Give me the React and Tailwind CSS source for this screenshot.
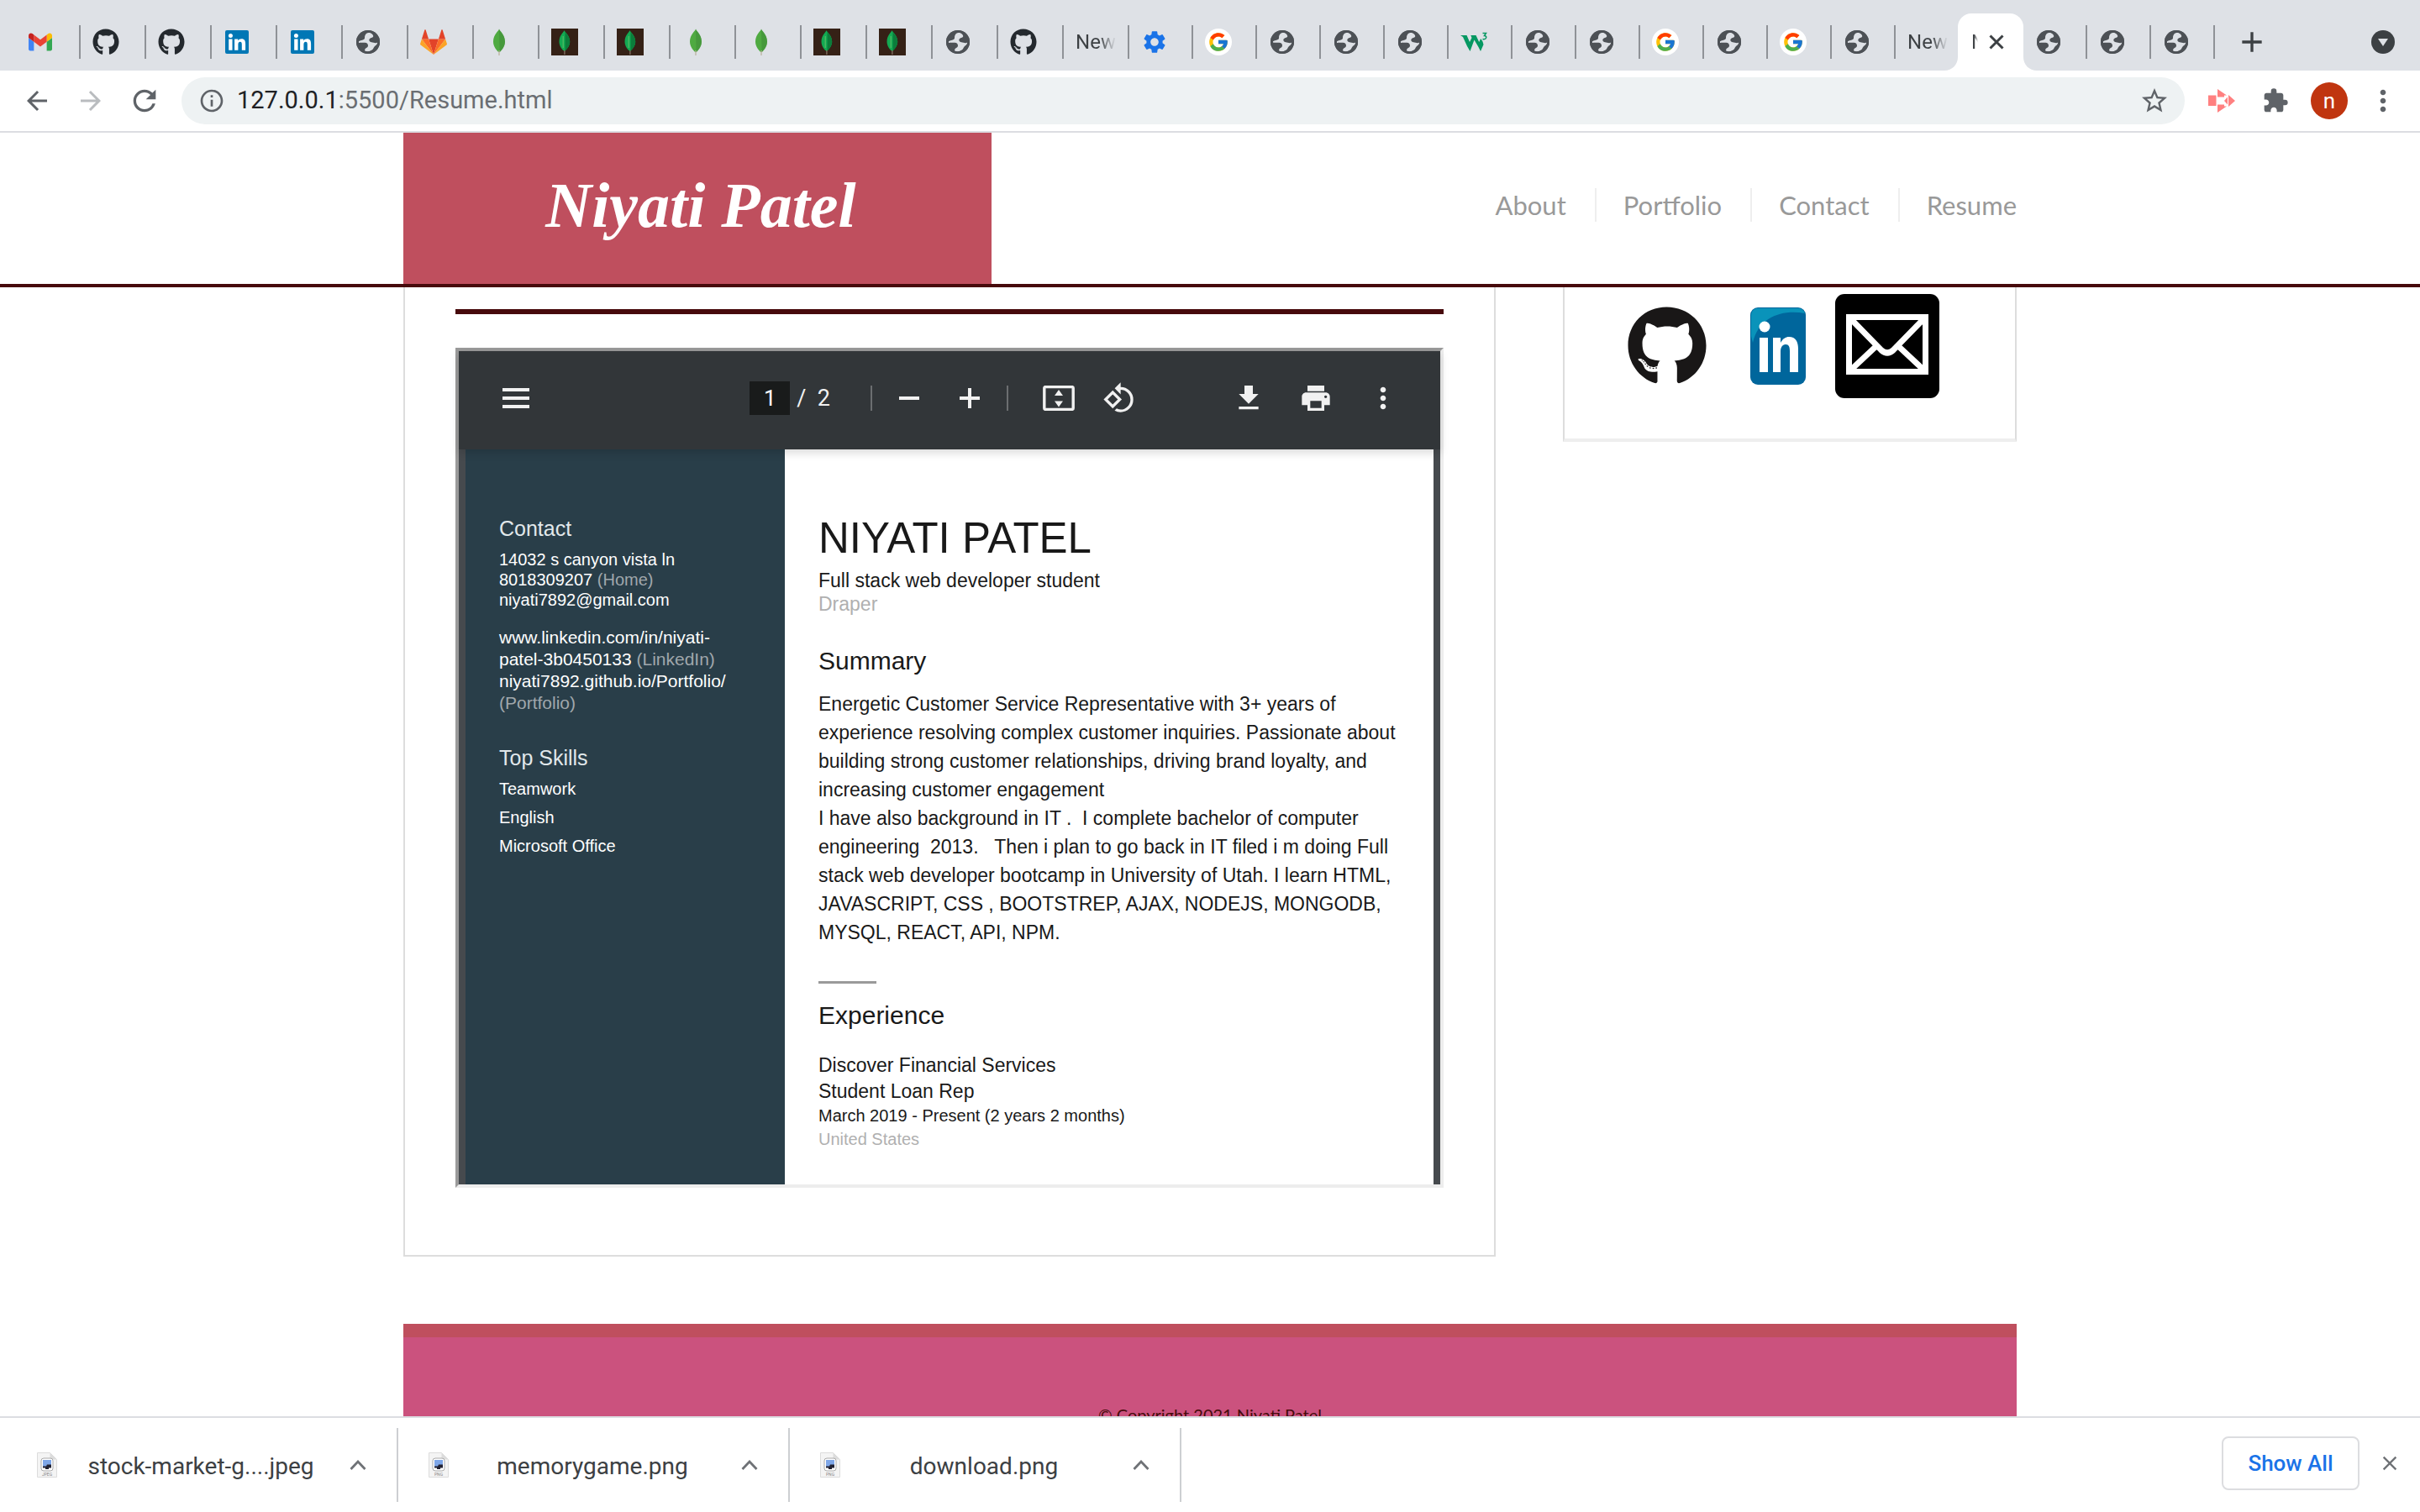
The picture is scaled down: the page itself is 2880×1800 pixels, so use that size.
import React from "react";
import {
  MdArrowBack, MdArrowForward, MdRefresh, MdInfoOutline, MdStarBorder, MdExtension, MdMoreVert,
  MdSettings, MdPrint, MdRotate90DegreesCcw, MdClose, MdAdd,
} from "react-icons/md";
import { FaGithub } from "react-icons/fa";
import { FcGoogle } from "react-icons/fc";

const Gmail = () => (
  <svg viewBox="52 42 88 66" className="w-7 h-[22px]">
    <path fill="#4285f4" d="M58 108h14V74L52 59v43c0 3.320 2.690 6 6 6" />
    <path fill="#34a853" d="M120 108h14c3.320 0 6-2.690 6-6V59l-20 15" />
    <path fill="#fbbc04" d="M120 48v26l20-15v-8c0-7.420-8.470-11.650-14.400-7.200" />
    <path fill="#ea4335" d="M72 74V48l24 18 24-18v26L96 92" />
    <path fill="#c5221f" d="M52 51v8l20 15V48l-5.600-4.200c-5.940-4.450-14.400-.22-14.400 7.200" />
  </svg>
);

const GithubTab = () => <FaGithub className="size-8 text-[#24292e]" />;

const LinkedinTab = () => (
  <svg viewBox="0 0 28 28" className="size-7">
    <rect width="28" height="28" rx="2" fill="#0077b5" />
    <circle cx="6.400" cy="6.600" r="2.500" fill="#fff" />
    <path fill="#fff" d="M4.200 10.600h4.300v13.200H4.200zM11.100 10.600h4.100v1.800c.8-1.300 2.200-2.200 4.200-2.200 3.700 0 4.700 2.300 4.700 6v7.600h-4.300v-6.800c0-1.700-.2-3.200-2-3.200s-2.400 1.400-2.400 3.200v6.800h-4.300z" />
  </svg>
);

const Globe = () => (
  <svg viewBox="0 0 28 28" className="size-7">
    <circle cx="14" cy="14" r="14" fill="#4d5156" />
    <path fill="#dee1e6" d="M16 2.800c-2.500 0-4.500 1-5.500 3.200-1 2 .2 3.500-1.200 4.800-1.600 1.400-4.600.9-6.300 2.500-.4 1.600.2 1.400 2.200 1.400h5c2.500 0 3.800 1.600 3.800 3.600 0 2.400-2.600 2.600-3.600 4.200-.6 1.200-.2 2.400.6 3 2.200.6 5.400-.4 7.600-1.900 1.600-1.200 2-3 3.200-4.400 1.300-1.200 3.200-1.800 3.500-4.600-1.500 1-3 .8-4.700.2-2-.8-3.200-.4-4.600-1.600-1.200-1.200-.8-3 .8-3.800 1.400-.8 2.800-.2 3.400-1.800.4-1.600-1.400-3.800-4.200-4.800z" />
    <circle cx="14" cy="14" r="12.600" fill="none" stroke="#4d5156" strokeWidth="2.800" />
  </svg>
);

const Gitlab = () => (
  <svg viewBox="0 0 32 30" className="w-8 h-[30px]">
    <path fill="#e24329" d="M16 30 21.900 11.500H10.100z" />
    <path fill="#fc6d26" d="M16 30 10.100 11.500H1.900zM16 30 21.900 11.500h8.200z" />
    <path fill="#fca326" d="M1.900 11.500.1 17c-.2.500 0 1.100.5 1.400L16 30zM30.100 11.500l1.800 5.500c.2.500 0 1.100-.5 1.400L16 30z" />
    <path fill="#e24329" d="M1.900 11.500h8.200L6.600.6c-.2-.6-1-.6-1.200 0zM30.100 11.500h-8.200L25.400.6c.2-.6 1-.6 1.200 0z" />
  </svg>
);

const Leaf = () => (
  <svg viewBox="0 0 32 32" className="size-8">
    <path fill="#4faa41" d="M16 .5c0 1.800-7 6.500-7 15 0 6 4 10.500 6.400 12.500h1.200C19 26 23 21.500 23 15.500 23 7 16 2.300 16 .5z" />
    <path fill="#3f8b38" d="M16 .5c0 1.800 7 6.500 7 15 0 6-4 10.500-6.400 12.500z" opacity=".55" />
    <path fill="#b8b09a" d="M15.400 26h1.200v6h-1.200z" />
  </svg>
);

const LeafDark = () => (
  <svg viewBox="0 0 32 32" className="size-8">
    <path fill="#352116" d="M0 0h32v32H0z" />
    <path fill="#13aa52" d="M15.500 2c0 2-6 5.500-6 13.500 0 5.500 3.500 9.500 5.500 11h1.200c2-1.500 6-5.500 6-11C22.200 7.500 15.500 4 15.500 2z" />
    <path fill="#0b7d3b" d="M16.500 4c1 2 5.700 5.500 5.700 11.500 0 5.500-4 9.500-5.700 11z" />
    <path fill="#6abf6a" d="M13.500 9h1.500v14h-1.500z" opacity=".6" />
    <path fill="#8a7a6a" d="M15.300 26h1.200v5h-1.200z" />
  </svg>
);

const Google = () => (
  <span className="flex size-8 items-center justify-center rounded-full bg-white">
    <FcGoogle className="size-[26px]" />
  </span>
);

const W3 = () => (
  <svg viewBox="0 0 32 24" className="w-8 h-6">
    <path fill="#059862" d="M0 4h7.500l3.500 8 2.500-5-1.200-3h6.200l3.700 8 2-4L26.500 11.500 27.500 15 24 23l-2.500-5-5-8.500L11.500 23 8 17 3 6z" />
    <path fill="none" stroke="#059862" strokeWidth="1.500" d="M26.500 1.500h4l-2 3c3.500 0 3 5-2 4" />
  </svg>
);

const Settings = () => <MdSettings className="size-8 text-[#1a73e8]" />;

const FadedTitle = () => (
  <span className="w-12 overflow-hidden bg-linear-to-r from-[#3c4043] from-60% to-transparent bg-clip-text text-2xl text-transparent">New</span>
);

const wideTabs = [Gmail, GithubTab, GithubTab, LinkedinTab, LinkedinTab, Globe, Gitlab, Leaf, LeafDark, LeafDark, Leaf, Leaf, LeafDark, LeafDark, Globe, GithubTab, FadedTitle];
const narrowTabs = [Settings, Google, Globe, Globe, Globe, W3, Globe, Globe, Google, Globe, Google, Globe];
const lastTabs = [Globe, Globe, Globe];

function Tab({ icon: Icon, wide }) {
  return (
    <button type="button" aria-label="Tab" className={`flex h-10 shrink items-center border-r-2 border-[#8f9297] ${wide ? "w-[78px]" : "w-[76px]"}`}>
      <span className={`flex justify-center ml-3.5 ${Icon === FadedTitle ? "w-12" : "w-8"}`}><Icon /></span>
    </button>
  );
}

function TabStrip() {
  return (
    <div className="flex h-[84px] shrink-0 items-center bg-[#dee1e6] pl-[18px] pt-4 pr-[28px]">
      {wideTabs.map((icon, i) => <Tab key={i} icon={icon} wide />)}
      {narrowTabs.map((icon, i) => <Tab key={i} icon={icon} />)}
      <button type="button" aria-label="New Tab" className="flex h-10 w-[74px] items-center pl-3.5"><FadedTitle /></button>
      <div className="relative flex h-[68px] w-[78px] items-center self-end rounded-t-2xl bg-white pl-4">
        <svg viewBox="0 0 16 16" className="absolute bottom-0 -left-4 size-4"><path fill="#fff" d="M16 0v16H0C9 16 16 9 16 0z" /></svg>
        <svg viewBox="0 0 16 16" className="absolute bottom-0 -right-4 size-4"><path fill="#fff" d="M0 0v16h16C7 16 0 9 0 0z" /></svg>
        <span className="w-2 overflow-hidden bg-linear-to-r from-[#3c4043] from-40% to-transparent bg-clip-text text-2xl text-transparent">N</span>
        <button type="button" aria-label="Close tab" className="ml-2.5 text-[#3c4043]">
          <svg viewBox="0 0 24 24" className="size-6"><path d="M4.500 4.500l15 15m0-15-15 15" stroke="currentColor" strokeWidth="3" /></svg>
        </button>
      </div>
      {lastTabs.map((icon, i) => <Tab key={i} icon={icon} />)}
      <button type="button" aria-label="Open new tab" className="ml-6 text-[#3c4043]"><MdAdd className="size-10" /></button>
      <button type="button" aria-label="Search tabs" className="ml-auto mr-0.5">
        <svg viewBox="0 0 28 28" className="size-7"><circle cx="14" cy="14" r="14" fill="#3c4043" /><path fill="#dee1e6" d="M8 10h12l-6 9z" /></svg>
      </button>
    </div>
  );
}

function AddressBar() {
  return (
    <div className="flex h-[74px] shrink-0 items-center border-b-2 border-[#dcdde2] bg-white pr-6 pl-[26px] text-[#5f6368]">
      <button type="button" aria-label="Back"><MdArrowBack className="size-9" /></button>
      <button type="button" aria-label="Forward" className="ml-7 text-[#b9bcbf]"><MdArrowForward className="size-9" /></button>
      <button type="button" aria-label="Reload" className="ml-[26px]"><MdRefresh className="size-10" /></button>
      <div className="ml-6 flex h-14 flex-1 items-center rounded-full bg-[#eef2f3] pl-5 pr-[18px]">
        <MdInfoOutline className="size-8" />
        <div className="relative ml-3.5 flex-1 text-[29px]">
          <input aria-label="Address" defaultValue="127.0.0.1:5500/Resume.html" className="w-full bg-transparent text-transparent outline-none" />
          <span aria-hidden="true" className="pointer-events-none absolute inset-0 flex items-center text-[#6a6e72]"><span className="text-[#202124]">127.0.0.1</span>:5500/Resume.html</span>
        </div>
        <button type="button" aria-label="Bookmark"><MdStarBorder className="size-9" /></button>
      </div>
      <button type="button" aria-label="Screen recorder" className="ml-7">
        <svg viewBox="0 0 32 28" className="w-8 h-7">
          <path fill="#ff8080" d="M0 7.500h9.500v12.500H0zM11 0l11 7.500H17L11 9zM11 28l11-7.500h-5L11 19zM24 7l8 7-8 7z" />
          <path fill="#ff8080" d="M11 7h8v2.500h-8zM11 18.500h8V21h-8zM19 14l4-4.500v9z" />
        </svg>
      </button>
      <button type="button" aria-label="Extensions" className="ml-8"><MdExtension className="size-8" /></button>
      <button type="button" aria-label="Profile" className="ml-[26px] size-11 rounded-full bg-[#c0350f] text-[26px] leading-none text-white">n</button>
      <button type="button" aria-label="Menu" className="ml-[22px]"><MdMoreVert className="size-10" /></button>
    </div>
  );
}

function SiteHeader() {
  const links = ["About", "Portfolio", "Contact", "Resume"];
  return (
    <header className="h-[184px] shrink-0 border-b-4 border-[#470a0c] bg-white">
      <div className="mx-auto flex h-full w-2/3 justify-between">
        <h1 className="flex w-[700px] items-center justify-center bg-[#bf4f5e] pb-2 pl-2 font-['Liberation_Serif',serif] text-[76px] font-bold italic text-white">
          <a href="#home">Niyati Patel</a>
        </h1>
        <nav className="-mt-2 flex h-10 items-center self-center font-['Lato',sans-serif] text-[31px] leading-10 text-[#999]">
          {links.map((l, i) => (
            <a key={l} href={"#" + l} className={i < 3 ? "mr-8 border-r-2 border-[#eee] pr-[34px]" : ""}>{l}</a>
          ))}
        </nav>
      </div>
    </header>
  );
}

const ibtn = "flex size-10 items-center justify-center";

function PdfToolbar() {
  return (
    <div className="relative z-10 flex h-[117px] items-center bg-[#323639] pb-[5px] pr-12 pl-12 font-['Roboto',sans-serif] text-[26px] text-[#f1f1f1] shadow-[0_4px_10px_rgba(0,0,0,0.15)]">
      <button type="button" aria-label="Toggle sidebar" className={ibtn}>
        <svg viewBox="0 0 32 24" className="w-8 h-6"><path fill="currentColor" d="M0 0h32v4H0zM0 10h32v4H0zM0 20h32v4H0z" /></svg>
      </button>
      <div className="ml-auto flex items-center">
        <input aria-label="Page number" defaultValue="1" className="h-10 w-12 bg-[#191b1b] text-center text-white outline-none" />
        <span className="ml-2 whitespace-pre text-[27px]">/  2</span>
        <span className="ml-12 h-[30px] w-0.5 bg-[#6b6e70]" />
        <button type="button" aria-label="Zoom out" className={`${ibtn} ml-6`}>
          <svg viewBox="0 0 24 24" className="size-6"><path fill="currentColor" d="M0 10h24v4H0z" /></svg>
        </button>
        <button type="button" aria-label="Zoom in" className={`${ibtn} ml-8`}>
          <svg viewBox="0 0 24 24" className="size-6"><path fill="currentColor" d="M0 10h10V0h4v10h10v4H14v10h-4V14H0z" /></svg>
        </button>
        <span className="ml-6 h-[30px] w-0.5 bg-[#6b6e70]" />
        <button type="button" aria-label="Fit to page" className={`${ibtn} ml-10`}>
          <svg viewBox="0 0 38 30" className="h-[30px] w-[38px]">
            <rect x="1.800" y="1.600" width="34.400" height="26.800" rx="1.500" fill="none" stroke="currentColor" strokeWidth="3.400" />
            <path fill="currentColor" d="M14 12h10l-5-7zM14 18.500h10l-5 7z" />
          </svg>
        </button>
        <button type="button" aria-label="Rotate" className={`${ibtn} ml-8`}><MdRotate90DegreesCcw className="size-10" /></button>
      </div>
      <div className="ml-[114px] flex items-center gap-10">
        <button type="button" aria-label="Download" className={ibtn}>
          <svg viewBox="0 0 24 24" className="size-10"><path fill="currentColor" d="M19 9h-4V3H9v6H5l7 7 7-7zM5 18v2h14v-2H5z" /></svg>
        </button>
        <button type="button" aria-label="Print" className={ibtn}><MdPrint className="size-10" /></button>
        <button type="button" aria-label="More actions" className={ibtn}><MdMoreVert className="size-[42px]" /></button>
      </div>
    </div>
  );
}

const Muted = ({ children }) => <span className="text-[#a0a7ac]">{children}</span>;

const summary = [
  "Energetic Customer Service Representative with 3+ years of",
  "experience resolving complex customer inquiries. Passionate about",
  "building strong customer relationships, driving brand loyalty, and",
  "increasing customer engagement",
  "I have also background in IT .  I complete bachelor of computer",
  "engineering  2013.   Then i plan to go back in IT filed i m doing Full",
  "stack web developer bootcamp in University of Utah. I learn HTML,",
  "JAVASCRIPT, CSS , BOOTSTREP, AJAX, NODEJS, MONGODB,",
  "MYSQL, REACT, API, NPM.",
];

function PdfPage() {
  return (
    <div className="flex h-[875px] border-x-8 border-[#464a4e] bg-white font-['Liberation_Sans',sans-serif] whitespace-pre">
      <aside className="w-[380px] shrink-0 bg-[#293e49] pt-[78px] pl-10 text-xl text-white">
        <h2 className="text-[25px] leading-8 text-[#e1e8eb]">Contact</h2>
        <p className="mt-[9px] leading-6">14032 s canyon vista ln</p>
        <p className="leading-6">8018309207 <Muted>(Home)</Muted></p>
        <p className="leading-6">niyati7892@gmail.com</p>
        <div className="mt-5 text-[21px] leading-[26px]">
          <p>www.linkedin.com/in/niyati-</p>
          <p>patel-3b0450133 <Muted>(LinkedIn)</Muted></p>
          <p>niyati7892.github.io/Portfolio/</p>
          <p><Muted>(Portfolio)</Muted></p>
        </div>
        <h2 className="mt-9 text-[25px] leading-8 text-[#e1e8eb]">Top Skills</h2>
        <ul className="mt-1 leading-[34px]"><li>Teamwork</li><li>English</li><li>Microsoft Office</li></ul>
      </aside>
      <article className="flex-1 pt-[76px] pl-10 text-[23px] text-[#191919]">
        <h1 className="text-[51px] leading-[60px]">NIYATI PATEL</h1>
        <p className="mt-1.5 leading-7">Full stack web developer student</p>
        <p className="leading-7 text-[#b0b0b0]">Draper</p>
        <h2 className="mt-[34px] text-[30px] leading-10">Summary</h2>
        <div className="mt-3.5 leading-[34px]">{summary.map((s) => <p key={s}>{s}</p>)}</div>
        <hr className="mt-[41px] h-[3px] w-[69px] border-0 bg-[#9a9a9a]" />
        <h2 className="mt-[18px] text-[30px] leading-10">Experience</h2>
        <p className="mt-6 leading-[31px]">Discover Financial Services</p>
        <p className="leading-[31px]">Student Loan Rep</p>
        <div className="-mt-px text-xl leading-7">
          <p>March 2019 - Present (2 years 2 months)</p>
          <p className="text-[#b0b0b0]">United States</p>
        </div>
      </article>
    </div>
  );
}

function Social() {
  return (
    <aside className="flex items-center self-start border-x-2 border-b-4 border-x-[#ddd] border-b-[#eee] pt-2 pb-12 pl-[74px]">
      <a href="#github" aria-label="GitHub"><FaGithub className="size-24 text-[#191717]" /></a>
      <a href="#linkedin" aria-label="LinkedIn" className="ml-[51px]">
        <svg viewBox="0 0 66 92" className="h-[92px] w-[66px]">
          <rect width="66" height="92" rx="9" fill="#00669c" />
          <path fill="#0da3c4" opacity=".75" d="M9 1h48c4 0 7 3 8 6C40 2 10 10 3 42l-2-8V10c0-5 3-9 8-9z" />
          <circle cx="17" cy="23" r="6.500" fill="#fff" />
          <path fill="#fff" d="M11 36h10v41H11zM27 36h9v6c3-5 6-7 10-7 8 0 11 6 11 14v28H47V52c0-5-1-8-5-8s-6 4-6 8v25h-9z" />
        </svg>
      </a>
      <a href="#mail" aria-label="Email" className="ml-[35px] flex size-[124px] items-center justify-center rounded-[11px] bg-black">
        <svg viewBox="0 0 98 72" className="mb-1 h-[72px] w-[98px]" fill="none" stroke="#fff" strokeWidth="7">
          <path d="M3.500 3.500h91v65h-91zM5 5l37 38q7 6 14 0L93 5M5 67l32-30M93 67 61 37" />
        </svg>
      </a>
    </aside>
  );
}

function FileIcon({ kind }) {
  return (
    <svg viewBox="0 0 24 30" className="h-[30px] w-6">
      <path fill="#f4f4f4" stroke="#dcdcdc" d="M.5.5h15l8 8v21H.5z" />
      <path fill="#dcdcdc" d="M15.500.5v8h8z" />
      <rect x="5" y="7" width="14" height="15" rx="3" fill="#fff" stroke="#aaa" />
      <path fill="#7ea6e8" d="M7 9h10v8H7z" />
      <path fill="#223" d="M7 16.500h4l1-2h5v4h-3v1.500h-4V18.500H7z" />
      <text x="12" y="27.500" textAnchor="middle" fontSize="5" fill="#888">{kind}</text>
    </svg>
  );
}

function Downloads() {
  const files = [["stock-market-g....jpeg", "JPEG"], ["memorygame.png", "PNG"], ["download.png", "PNG"]];
  return (
    <footer className="flex h-[114px] shrink-0 items-start border-t-2 border-[#dcdde2] bg-white pt-3 pl-2 pr-[22px]">
      {files.map(([name, kind]) => (
        <div key={name} className="flex h-[88px] w-[466px] items-center border-r-2 border-[#cdcfd2] pl-9 pr-9">
          <FileIcon kind={kind} />
          <button type="button" className="flex-1 pt-1 pr-1.5 text-center text-[28px] text-[#3c4043]">{name}</button>
          <button type="button" aria-label="File options" className="text-[#6f7276]">
            <svg viewBox="0 0 20 12" className="h-3 w-5"><path d="M1.500 11 10 2l8.500 9" fill="none" stroke="currentColor" strokeWidth="2.800" /></svg>
          </button>
        </div>
      ))}
      <button type="button" className="mt-2.5 ml-auto h-16 w-[164px] rounded-lg border-2 border-[#dcdde0] text-[26px] font-medium text-[#1a73e8]">Show All</button>
      <button type="button" aria-label="Close downloads" className="mt-7 ml-[22px] text-[#6f7276]"><MdClose className="size-7" /></button>
    </footer>
  );
}

export default function App() {
  return (
    <div className="flex h-screen flex-col overflow-hidden bg-white font-['Roboto',sans-serif]">
      <TabStrip />
      <AddressBar />
      <SiteHeader />
      <div className="mx-auto min-h-0 w-2/3 flex-1 overflow-hidden">
        <main className="grid grid-cols-[65fr_27fr] gap-20">
          <section className="border-x-2 border-b-2 border-[#ddd] px-[60px] pt-[26px] pb-20">
            <hr className="h-1.5 border-0 bg-[#470a0c]" />
            <div className="mt-10 border-4 border-t-[#9a9a9a] border-r-[#ededed] border-b-[#ededed] border-l-[#9a9a9a]">
              <PdfToolbar />
              <PdfPage />
            </div>
          </section>
          <Social />
        </main>
        <div className="mt-20 border-t-16 border-[#bf4f5e] bg-[#cb527e] pt-[76px] pb-20 text-center font-['Lato',sans-serif] text-xl leading-8 text-[#470a0c]">
          <p>© Copyright 2021 Niyati Patel</p>
        </div>
      </div>
      <Downloads />
    </div>
  );
}
